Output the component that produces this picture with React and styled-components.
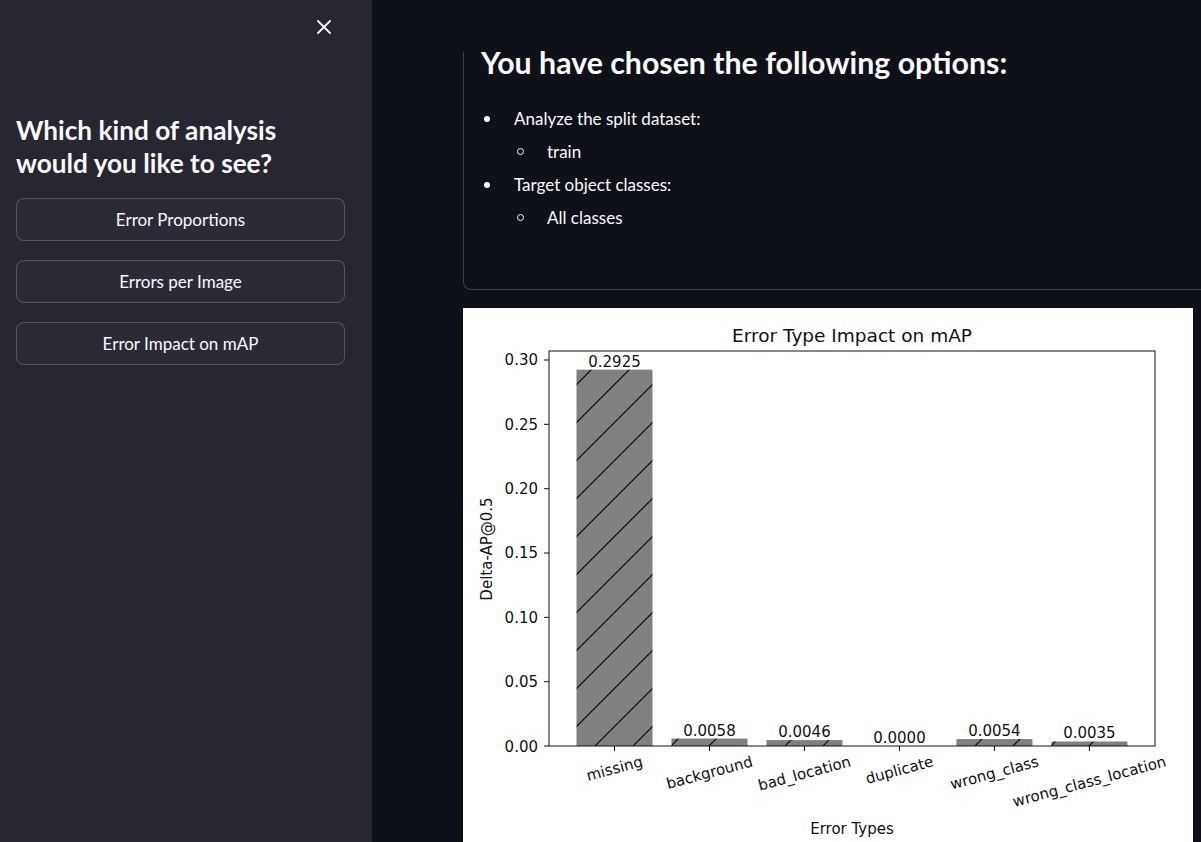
import React from 'react';
import styled, { createGlobalStyle } from 'styled-components';

const GlobalStyle = createGlobalStyle`
  html, body {
    margin: 0;
    padding: 0;
    background: #0e1117;
  }
  body {
    font-family: Lato, "Noto Sans", sans-serif;
    color: #fafafa;
  }
`;

const errors = [
  { name: 'missing', value: 0.2925, width: 57.6 },
  { name: 'background', value: 0.0058, width: 89 },
  { name: 'bad_location', value: 0.0046, width: 95 },
  { name: 'duplicate', value: 0.0, width: 69 },
  { name: 'wrong_class', value: 0.0054, width: 91 },
  { name: 'wrong_class_location', value: 0.0035, width: 158 },
];

const options = [
  { label: 'Analyze the split dataset:', values: ['train'] },
  { label: 'Target object classes:', values: ['All classes'] },
];

// chart geometry (px, inside the figure)
const AX = { left: 86, right: 692, top: 43, bottom: 438 };
const PX_PER_UNIT_Y = 1286.7;
const PX_PER_BAR = 94.98;
const X0 = 151.5;
const yOf = (v) => AX.bottom - v * PX_PER_UNIT_Y;

const ImpactChart = () => {
  const ticks = [0, 0.05, 0.1, 0.15, 0.2, 0.25, 0.3];
  return (
    <Figure width="730" height="545" viewBox="0 0 730 545">
      <defs>
        <pattern id="hatch" width="38" height="38" patternUnits="userSpaceOnUse">
          <rect width="38" height="38" fill="#808080" />
          <path d="M0 38 L38 0 M-4 4 L4 -4 M34 42 L42 34" stroke="#000" strokeWidth="1.1" />
        </pattern>
      </defs>
      <rect width="730" height="545" fill="#fff" />

      <text x="389" y="34" fontSize="18.5" textAnchor="middle" fill="#111">
        Error Type Impact on mAP
      </text>

      {errors.map((e, i) => {
        const cx = X0 + i * PX_PER_BAR;
        const top = yOf(e.value);
        return (
          <g key={e.name}>
            {e.value > 0 && (
              <rect x={cx - 38} y={top} width="76" height={AX.bottom - top} fill="url(#hatch)" />
            )}
            <text x={cx} y={top - 3} fontSize="15" textAnchor="middle" fill="#111">
              {e.value.toFixed(4)}
            </text>
          </g>
        );
      })}

      <rect
        x={AX.left}
        y={AX.top}
        width={AX.right - AX.left}
        height={AX.bottom - AX.top}
        fill="none"
        stroke="#111"
        strokeWidth="1"
      />

      {ticks.map((t) => (
        <g key={t}>
          <line x1={AX.left - 5} x2={AX.left} y1={yOf(t)} y2={yOf(t)} stroke="#111" />
          <text x={AX.left - 11} y={yOf(t) + 5.5} fontSize="15" textAnchor="end" fill="#111">
            {t.toFixed(2)}
          </text>
        </g>
      ))}

      {errors.map((e, i) => {
        const cx = X0 + i * PX_PER_BAR;
        const boxH = e.width * 0.2588 + 16.4;
        const cy = 445 + boxH / 2;
        return (
          <g key={e.name}>
            <line x1={cx} x2={cx} y1={AX.bottom} y2={AX.bottom + 5} stroke="#111" />
            <text
              x={cx}
              y={cy}
              fontSize="15"
              textAnchor="middle"
              dominantBaseline="central"
              fill="#111"
              transform={`rotate(-15 ${cx} ${cy})`}
            >
              {e.name}
            </text>
          </g>
        );
      })}

      <text
        x="24"
        y="241"
        fontSize="15"
        textAnchor="middle"
        dominantBaseline="central"
        fill="#111"
        transform="rotate(-90 24 241)"
      >
        Delta-AP@0.5
      </text>
      <text x="389" y="526" fontSize="15" textAnchor="middle" fill="#111">
        Error Types
      </text>
    </Figure>
  );
};

const CloseIcon = () => (
  <svg width="14" height="14" viewBox="0 0 14 14">
    <path d="M1 1 L13 13 M13 1 L1 13" stroke="#fafafa" strokeWidth="1.8" strokeLinecap="round" />
  </svg>
);

export default function App() {
  return (
    <>
      <GlobalStyle />
      <Page>
        <Sidebar>
          <CloseRow>
            <CloseButton aria-label="Close sidebar">
              <CloseIcon />
            </CloseButton>
          </CloseRow>
          <SideTitle>Which kind of analysis would you like to see?</SideTitle>
          <ButtonStack>
            <SideButton>Error Proportions</SideButton>
            <SideButton>Errors per Image</SideButton>
            <SideButton>Error Impact on mAP</SideButton>
          </ButtonStack>
        </Sidebar>

        <Main>
          <Content>
            <OptionsBox>
              <Heading>You have chosen the following options:</Heading>
              <List>
                {options.map((o) => (
                  <React.Fragment key={o.label}>
                    <Item>
                      <Marker />
                      {o.label}
                    </Item>
                    {o.values.map((v) => (
                      <Item key={v} nested>
                        <Marker hollow />
                        {v}
                      </Item>
                    ))}
                  </React.Fragment>
                ))}
              </List>
            </OptionsBox>
            <ChartFrame>
              <ImpactChart />
            </ChartFrame>
          </Content>
        </Main>
      </Page>
    </>
  );
}

const Page = styled.div`
  display: flex;
  height: 100vh;
  overflow: hidden;
`;

const Sidebar = styled.aside`
  width: 372px;
  flex-shrink: 0;
  box-sizing: border-box;
  background: #262730;
  padding: 6px 27px 0 16px;
  display: flex;
  flex-direction: column;
`;

const CloseRow = styled.div`
  display: flex;
  justify-content: flex-end;
`;

const CloseButton = styled.button`
  width: 42px;
  height: 42px;
  display: flex;
  align-items: center;
  justify-content: center;
  background: none;
  border: none;
  padding: 0;
  cursor: pointer;
`;

const SideTitle = styled.h3`
  margin: 66px 0 18px;
  font-size: 26.2px;
  font-weight: 700;
  line-height: 33px;
  color: #fafafa;
`;

const ButtonStack = styled.div`
  display: flex;
  flex-direction: column;
  gap: 19px;
`;

const SideButton = styled.button`
  height: 43px;
  width: 100%;
  box-sizing: border-box;
  border: 1px solid rgba(250, 250, 250, 0.2);
  border-radius: 8px;
  background: #2a2b35;
  color: #fafafa;
  font-family: Lato, "Noto Sans", sans-serif;
  font-size: 17px;
  cursor: pointer;
`;

const Main = styled.main`
  flex: 1;
  min-width: 0;
  background: #0e1117;
  overflow: hidden;
  padding-left: 91px;
`;

const Content = styled.div`
  width: 820px;
  display: flex;
  flex-direction: column;
  gap: 18px;
`;

const OptionsBox = styled.section`
  margin-top: 52px;
  border-left: 1px solid rgba(250, 250, 250, 0.2);
  border-bottom: 1px solid rgba(250, 250, 250, 0.2);
  border-bottom-left-radius: 8px;
  padding: 0 16px 55px 17px;
`;

const Heading = styled.h2`
  margin: -9px 0 21px;
  font-size: 30.3px;
  font-weight: 700;
  line-height: 38px;
  color: #fafafa;
`;

const List = styled.div`
  display: flex;
  flex-direction: column;
`;

const Item = styled.div`
  display: flex;
  align-items: center;
  height: 33px;
  font-size: 17px;
  color: #fafafa;
  padding-left: ${(p) => (p.nested ? '33px' : '0')};
`;

const Marker = styled.span`
  width: 33px;
  flex-shrink: 0;
  display: flex;
  align-items: center;

  &::before {
    content: '';
    box-sizing: border-box;
    width: ${(p) => (p.hollow ? '7px' : '6px')};
    height: ${(p) => (p.hollow ? '7px' : '6px')};
    margin-left: 3px;
    border-radius: 50%;
    background: ${(p) => (p.hollow ? 'transparent' : '#fafafa')};
    border: ${(p) => (p.hollow ? '1px solid #fafafa' : 'none')};
  }
`;

const ChartFrame = styled.div`
  width: 730px;
  line-height: 0;
`;

const Figure = styled.svg`
  display: block;
  font-family: "DejaVu Sans", sans-serif;
`;
